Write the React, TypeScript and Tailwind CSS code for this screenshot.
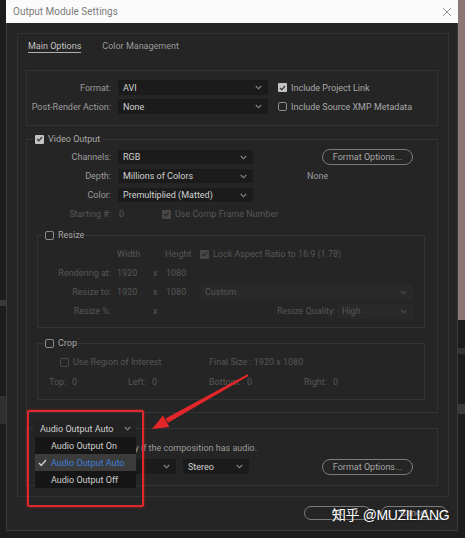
import React from "react";

function Chevron({ dim }: { dim?: boolean }) {
  return (
    <svg width="7" height="5" viewBox="0 0 7 5" className={dim ? "text-[#4a4a4a]" : "text-[#8a8a8a]"}>
      <polyline points="0.8,1 3.5,3.8 6.2,1" fill="none" stroke="currentColor" strokeWidth="1.1" />
    </svg>
  );
}

function Select({ text, className, dim }: { text: string; className: string; dim?: boolean }) {
  return (
    <div
      className={
        "flex items-center justify-between pl-[5px] pr-[6px] " +
        (dim ? "bg-[#292929] text-[#585858] " : "bg-[#1b1b1b] text-[#d2d2d2] ") +
        className
      }
    >
      <span>{text}</span>
      <Chevron dim={dim} />
    </div>
  );
}

function Check({ checked, dim }: { checked?: boolean; dim?: boolean }) {
  if (checked) {
    return (
      <div
        className={
          "w-[9px] h-[9px] rounded-[1px] flex items-center justify-center shrink-0 " +
          (dim ? "bg-[#474747]" : "bg-[#c4c4c4]")
        }
      >
        <svg width="7" height="6" viewBox="0 0 7 6">
          <polyline
            points="1,3 2.8,4.8 6,1"
            fill="none"
            stroke={dim ? "#2a2a2a" : "#3a3a3a"}
            strokeWidth="1.3"
          />
        </svg>
      </div>
    );
  }
  return (
    <div
      className={
        "w-[9px] h-[9px] rounded-[2px] border shrink-0 " + (dim ? "border-[#4a4a4a]" : "border-[#8c8c8c]")
      }
    />
  );
}

function Pill({ text, className }: { text: string; className: string }) {
  return (
    <div
      className={
        "rounded-full border border-[#7c7c7c] text-[#a4a4a4] flex items-center justify-center " + className
      }
    >
      {text}
    </div>
  );
}

export default function App() {
  return (
    <div className="relative w-[465px] h-[538px] overflow-hidden bg-[#1d1d1d] flex font-[Roboto,'Liberation_Sans',sans-serif] text-[9px] leading-[12px]">
      {/* left strip of the app behind */}
      <div className="w-[6px] flex flex-col">
        <div className="h-[300px] bg-[#1c1c1c]" />
        <div className="h-[6px] bg-[#3a3a3a]" />
        <div className="h-[90px] bg-[#1c1c1c]" />
        <div className="h-[28px] bg-[#2f2f2f]" />
        <div className="flex-1 bg-[#1c1c1c]" />
      </div>

      {/* dialog */}
      <div className="w-[452px] h-[531px] flex flex-col">
        <div className="h-[23px] bg-[#fbfbfb] flex items-center justify-between pl-[7px] pr-[6px]">
          <span className="text-[10px] text-[#7c7c7c]">Output Module Settings</span>
          <svg width="10" height="10" viewBox="0 0 10 10">
            <path d="M1 1 L9 9 M9 1 L1 9" stroke="#9a9a9a" strokeWidth="1" />
          </svg>
        </div>

        <div className="flex-1 bg-[#252525] border-x border-b border-[#3a3a3a] pl-[10px] pr-[8px] pt-[10px] flex flex-col">
          <div className="w-[432px] border border-[#323232] pl-[8px] pb-[10px]">
            {/* tabs */}
            <div className="mt-[6px] flex ml-[2px]">
              <span className="text-[#c4c4c4] border-b border-[#b0b0b0]">Main Options</span>
              <span className="ml-[21px] text-[#9a9a9a]">Color Management</span>
            </div>

            {/* main options */}
            <div className="mt-[17px] w-[412px] h-[56px] border border-[#333] pt-[9px] flex flex-col gap-[4px]">
              <div className="h-[15px] flex items-center">
                <span className="w-[84px] text-right text-[#9c9c9c]">Format:</span>
                <Select text="AVI" className="ml-[7px] w-[150px] h-[15px]" />
                <div className="ml-[10px]">
                  <Check checked />
                </div>
                <span className="ml-[4px] text-[#a8a8a8]">Include Project Link</span>
              </div>
              <div className="h-[15px] flex items-center">
                <span className="w-[84px] text-right text-[#9c9c9c]">Post-Render Action:</span>
                <Select text="None" className="ml-[7px] w-[150px] h-[15px]" />
                <div className="ml-[10px]">
                  <Check />
                </div>
                <span className="ml-[4px] text-[#a8a8a8]">Include Source XMP Metadata</span>
              </div>
            </div>

            {/* video output */}
            <fieldset className="mt-[7px] w-[412px] border border-[#333] pb-[12px]">
              <legend className="ml-[6px] px-[2px] h-[12px]">
                <div className="flex items-center gap-[4px] h-[12px]">
                  <Check checked />
                  <span className="text-[#a8a8a8]">Video Output</span>
                </div>
              </legend>
              <div className="mt-[5px] flex flex-col gap-[5px]">
                <div className="h-[14px] flex items-center">
                  <span className="w-[84px] text-right text-[#9c9c9c]">Channels:</span>
                  <Select text="RGB" className="ml-[7px] w-[135px] h-[14px]" />
                  <Pill text="Format Options..." className="ml-[69px] w-[91px] h-[16px]" />
                </div>
                <div className="h-[14px] flex items-center">
                  <span className="w-[84px] text-right text-[#9c9c9c]">Depth:</span>
                  <Select text="Millions of Colors" className="ml-[7px] w-[135px] h-[14px]" />
                  <span className="ml-[54px] text-[#9c9c9c]">None</span>
                </div>
                <div className="h-[14px] flex items-center">
                  <span className="w-[84px] text-right text-[#9c9c9c]">Color:</span>
                  <Select text="Premultiplied (Matted)" className="ml-[7px] w-[135px] h-[14px]" />
                </div>
                <div className="h-[14px] flex items-center text-[#575757]">
                  <span className="w-[84px] text-right">Starting #:</span>
                  <span className="ml-[7px] w-[44px] pl-[1px]">0</span>
                  <Check checked dim />
                  <span className="ml-[4px]">Use Comp Frame Number</span>
                </div>
              </div>

              {/* resize */}
              <fieldset className="mt-[8px] ml-[10px] w-[388px] border border-[#333] pb-[9px]">
                <legend className="ml-[6px] px-[1px] h-[12px]">
                  <div className="flex items-center gap-[4px] h-[12px]">
                    <Check />
                    <span className="text-[#a8a8a8]">Resize</span>
                  </div>
                </legend>
                <div className="mt-[6px] flex flex-col gap-[5px] text-[#575757]">
                  <div className="h-[14px] flex items-center">
                    <span className="w-[79px]" />
                    <span className="w-[48px]">Width</span>
                    <span className="w-[35px]">Height</span>
                    <Check checked dim />
                    <span className="ml-[4px]">Lock Aspect Ratio to 16:9 (1.78)</span>
                  </div>
                  <div className="h-[14px] flex items-center">
                    <span className="w-[73px] text-right">Rendering at:</span>
                    <span className="ml-[6px] w-[36px]">1920</span>
                    <span className="w-[13px]">x</span>
                    <span className="w-[34px]">1080</span>
                  </div>
                  <div className="h-[14px] flex items-center">
                    <span className="w-[73px] text-right">Resize to:</span>
                    <span className="ml-[6px] w-[36px]">1920</span>
                    <span className="w-[13px]">x</span>
                    <span className="w-[34px]">1080</span>
                    <Select text="Custom" dim className="w-[213px] h-[15px]" />
                  </div>
                  <div className="h-[14px] flex items-center">
                    <span className="w-[73px] text-right">Resize %:</span>
                    <span className="ml-[6px] w-[36px]" />
                    <span className="w-[13px]">x</span>
                    <span className="w-[34px]" />
                    <span className="ml-[77px] w-[60px]">Resize Quality:</span>
                    <Select text="High" dim className="w-[76px] h-[15px]" />
                  </div>
                </div>
              </fieldset>

              {/* crop */}
              <fieldset className="mt-[9px] ml-[10px] w-[388px] border border-[#333] pb-[10px]">
                <legend className="ml-[6px] px-[1px] h-[12px]">
                  <div className="flex items-center gap-[4px] h-[12px]">
                    <Check />
                    <span className="text-[#a8a8a8]">Crop</span>
                  </div>
                </legend>
                <div className="text-[#575757]">
                  <div className="mt-[6px] h-[14px] flex items-center pl-[22px]">
                    <Check dim />
                    <span className="ml-[4px] w-[136px]">Use Region of Interest</span>
                    <span>Final Size : 1920 x 1080</span>
                  </div>
                  <div className="mt-[6px] h-[14px] flex items-center pl-[11px]">
                    <div className="w-[79px] flex">
                      <span className="w-[23px]">Top:</span>
                      <span>0</span>
                    </div>
                    <div className="w-[81px] flex">
                      <span className="w-[24px]">Left:</span>
                      <span>0</span>
                    </div>
                    <div className="w-[95px] flex">
                      <span className="w-[38px]">Bottom:</span>
                      <span>0</span>
                    </div>
                    <div className="flex">
                      <span className="w-[29px]">Right:</span>
                      <span>0</span>
                    </div>
                  </div>
                </div>
              </fieldset>
            </fieldset>

            {/* audio */}
            <fieldset className="mt-[7px] w-[412px] border border-[#333] pb-[11px]">
              <legend className="ml-[6px] h-[17px]">
                <div className="w-[103px] h-[17px] flex items-center justify-between pl-[7px] pr-[5px] bg-[#222] text-[#cfcfcf]">
                  <span>Audio Output Auto</span>
                  <Chevron />
                </div>
              </legend>
              <div className="mt-[4px] h-[14px] flex items-center pl-[14px] text-[#9c9c9c]">
                Audio will be output only if the composition has audio.
              </div>
              <div className="mt-[4px] h-[15px] flex items-center pl-[10px]">
                <Select text="48.000 kHz" className="w-[52px] h-[15px]" />
                <Select text="16 Bit" className="ml-[6px] w-[81px] h-[15px]" />
                <Select text="Stereo" className="ml-[7px] w-[66px] h-[15px]" />
                <Pill text="Format Options..." className="ml-[73px] w-[91px] h-[16px]" />
              </div>
            </fieldset>
          </div>

          {/* bottom buttons */}
          <div className="mt-[9px] flex justify-end gap-[10px] pr-[2px]">
            <Pill text="OK" className="w-[67px] h-[14px]" />
            <Pill text="Cancel" className="w-[66px] h-[14px]" />
          </div>
        </div>
      </div>

      {/* right strip of the window behind */}
      <div className="w-[7px] flex flex-col">
        <div className="h-[320px] bg-[#8d7676]" />
        <div className="h-[28px] bg-[#1c1c1c]" />
        <div className="h-[6px] bg-[#333]" />
        <div className="h-[50px] bg-[#1c1c1c]" />
        <div className="h-[10px] bg-[#3a3a3a]" />
        <div className="flex-1 bg-[#1c1c1c]" />
      </div>

      {/* open audio menu */}
      <div className="absolute left-[35px] top-[437px] w-[101px] bg-[#161616] flex flex-col">
        <div className="h-[17px] flex items-center pl-[16px] text-[#cfcfcf]">Audio Output On</div>
        <div className="h-[17px] flex items-center bg-[#3b3b3b] text-[#3f7fd8]">
          <svg width="9" height="8" viewBox="0 0 9 8" className="ml-[3px] mr-[4px]">
            <polyline points="1,4 3.3,6.5 8,1" fill="none" stroke="#d0d0d0" strokeWidth="1.4" />
          </svg>
          Audio Output Auto
        </div>
        <div className="h-[17px] flex items-center pl-[16px] text-[#cfcfcf]">Audio Output Off</div>
      </div>

      {/* red highlight box */}
      <div className="absolute left-[27px] top-[410px] w-[117px] h-[97px] border-2 border-[#e0282c] rounded-[2px] shadow-[0_0_3px_rgba(224,40,44,0.6)]" />

      {/* red arrow */}
      <svg className="absolute left-0 top-0 pointer-events-none" width="465" height="538" viewBox="0 0 465 538">
        <polygon points="247.5,374.3 248.5,376 168,422.8 165.5,418.4" fill="#e2262a" />
        <polygon points="152,429 163,415.6 169.4,427" fill="#e2262a" />
      </svg>

      {/* watermark */}
      <div className="absolute left-[332px] top-[505px] text-[14px] leading-[20px] text-white tracking-[-0.4px] font-['Liberation_Sans','Noto_Sans_CJK_SC',sans-serif] [text-shadow:0_0_2px_rgba(0,0,0,0.6)]">
        知乎 @MUZILIANG
      </div>
    </div>
  );
}
